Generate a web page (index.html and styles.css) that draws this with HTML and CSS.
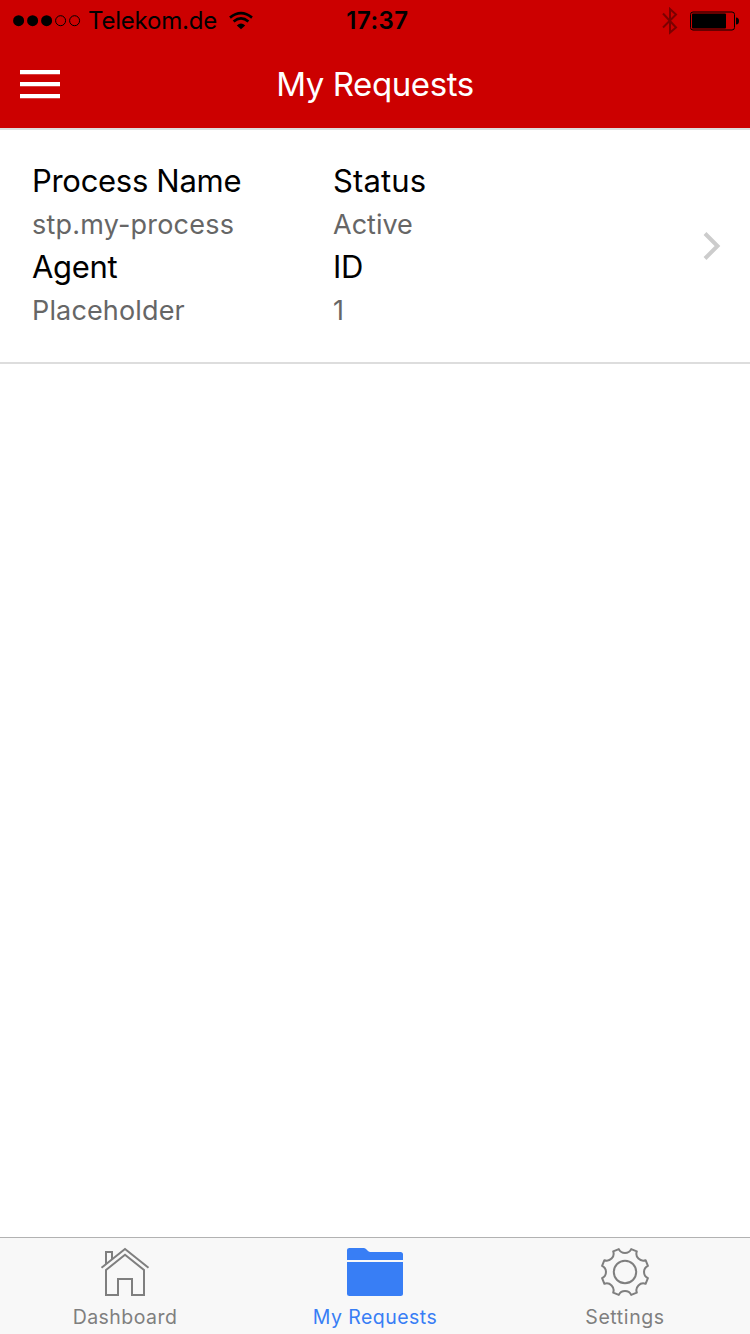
FILE: index.html
```html
<!DOCTYPE html>
<html lang="en">
<head>
<meta charset="utf-8">
<title>My Requests</title>
<link rel="stylesheet" href="styles.css">
</head>
<body>
<div class="app">
  <header class="header">
    <div class="status-bar">
      <div class="carrier">
        <svg class="signal" width="68" height="12" viewBox="0 0 68 12">
          <circle cx="5.6" cy="5.7" r="5.5"/><circle cx="19.6" cy="5.7" r="5.5"/><circle cx="33.6" cy="5.7" r="5.5"/>
          <g fill="none" stroke="#000"><circle cx="47.6" cy="5.7" r="5"/><circle cx="61.6" cy="5.7" r="5"/></g>
        </svg>
        <span class="carrier-name">Telekom.de</span>
        <svg class="wifi" width="26" height="20" viewBox="0 0 26 20">
          <g fill="none" stroke="#000" stroke-width="2.7">
            <path d="M2 6.6 Q13 -2.2 24 6.6"/>
            <path d="M5.6 10.5 Q13 4.4 20.4 10.5"/>
          </g>
          <path d="M8.8 14.4 Q13 10.8 17.2 14.4 L13 18.2Z"/>
        </svg>
      </div>
      <time class="clock">17:37</time>
      <div class="indicators">
        <svg width="16" height="28" viewBox="0 0 16 28"><path d="M1 6.5 L14 20.5 L8 25.5 V2 L14 7.5 L1 20.5" fill="none" stroke="#7b0000" stroke-width="2"/></svg>
        <svg width="50" height="20" viewBox="0 0 50 20">
          <rect x="1.5" y="1" width="44" height="18" rx="2.5" fill="none" stroke="#000" stroke-width="1"/>
          <rect x="3" y="2.5" width="34" height="15" rx="1"/>
          <path d="M47 6.5 Q50 6.5 50 10 Q50 13.5 47 13.5Z"/>
        </svg>
      </div>
    </div>
    <div class="nav-bar">
      <button class="menu" aria-label="Menu">
        <svg width="40" height="30" viewBox="0 0 40 30" fill="#fff"><path d="M0 1.1H40V5.2H0ZM0 13.1H40V17.2H0ZM0 25.1H40V29.2H0Z"/></svg>
      </button>
      <h1 class="title">My Requests</h1>
    </div>
  </header>
  <main class="content">
    <article class="request">
      <dl class="fields">
        <div class="col">
          <dt>Process Name</dt><dd class="process-value">stp.my-process</dd>
          <dt>Agent</dt><dd class="agent-value">Placeholder</dd>
        </div>
        <div class="col">
          <dt class="status-label">Status</dt><dd>Active</dd>
          <dt>ID</dt><dd>1</dd>
        </div>
      </dl>
      <svg class="chevron" width="20" height="32" viewBox="0 0 20 32"><path d="M3 3.5 L15.5 16 L3 28.5" fill="none" stroke="#ccc" stroke-width="4"/></svg>
    </article>
  </main>
  <nav class="tabs">
    <a class="tab">
      <svg width="60" height="52" viewBox="0 0 60 52" fill="none" stroke="#7f7f7f" stroke-width="2">
        <path d="M6.5 21.7 L30 3 L53.5 21.7 M11 18 V6 H17 V13"/>
        <path d="M11 24 L30 8.8 L49 24 V49 H37 V33 H23 V49 H11Z"/>
      </svg>
      <span class="label-dash">Dashboard</span>
    </a>
    <a class="tab active">
      <svg width="60" height="52" viewBox="0 0 60 52" fill="#387ef5">
        <path d="M2 14 V4 Q2 2 4.5 2 H18.5 Q20 2 21 3 L23 5 Q24 6 25.5 6 H55.5 Q58 6 58 8.5 V14Z"/>
        <path d="M2 16 H58 V47.5 Q58 50 55.5 50 H4.5 Q2 50 2 47.5Z"/>
      </svg>
      <span class="label-req">My Requests</span>
    </a>
    <a class="tab">
      <svg width="60" height="52" viewBox="-30 -26 60 52" fill="none" stroke="#7f7f7f" stroke-width="2" stroke-linejoin="round">
        <circle r="11.2"/>
        <path d="M-6.2 -22.9 A6.9 6.9 0 0 0 6.2 -22.9 L11.8 -20.6 A6.9 6.9 0 0 0 20.6 -11.8 L22.9 -6.2 A6.9 6.9 0 0 0 22.9 6.2 L20.6 11.8 A6.9 6.9 0 0 0 11.8 20.6 L6.2 22.9 A6.9 6.9 0 0 0 -6.2 22.9 L-11.8 20.6 A6.9 6.9 0 0 0 -20.6 11.8 L-22.9 6.2 A6.9 6.9 0 0 0 -22.9 -6.2 L-20.6 -11.8 A6.9 6.9 0 0 0 -11.8 -20.6Z"/>
      </svg>
      <span>Settings</span>
    </a>
  </nav>
</div>
</body>
</html>
```
FILE: styles.css
```css
* { box-sizing: border-box; }
body { margin: 0; font-family: Inter, "Liberation Sans", sans-serif; color: #000; }
svg { display: block; flex: none; }
.app { width: 750px; height: 1334px; display: flex; flex-direction: column; background: #fff; }
.header { height: 130px; background: #c00; border-bottom: 2px solid #ddd; }
.status-bar { height: 40px; display: grid; grid-template-columns: 1fr auto 1fr; align-items: center; padding: 2px 11px 0 13px; }
.carrier { display: flex; align-items: center; height: 38px; }
.carrier-name { font-size: 24px; line-height: 36px; margin-left: 7px; width: 129px; letter-spacing: -.2px; white-space: nowrap; }
.wifi { margin-left: 11px; }
.clock { font-size: 24px; font-weight: 600; line-height: 36px; letter-spacing: .5px; padding-left: 3px; }
.indicators { display: flex; justify-content: flex-end; align-items: center; gap: 11px; }
.nav-bar { height: 88px; display: grid; grid-template-columns: 40px 1fr 40px; align-items: center; padding: 0 20px; }
.menu { width: 40px; padding: 0; border: 0; background: none; }
.title { margin: 0; text-align: center; color: #fff; font-size: 33px; font-weight: 400; line-height: 44px; letter-spacing: -.4px; }
.content { flex: 1; }
.request { height: 234px; border-bottom: 2px solid #ddd; display: flex; align-items: center; justify-content: space-between; padding: 0 28px 0 32px; }
.fields { margin: 0; display: grid; grid-template-columns: 301px 301px; }
.col { display: flex; flex-direction: column; }
.col dt { font-size: 31px; line-height: 41px; padding-bottom: 2px; white-space: nowrap; letter-spacing: -.3px; }
.col .status-label { letter-spacing: .15px; }
.col dd { margin: 0; font-size: 27px; line-height: 43px; color: #666; white-space: nowrap; }
.col .process-value { letter-spacing: .2px; }
.col .agent-value { letter-spacing: .15px; }
.tabs { height: 97px; background: #f8f8f8; border-top: 1px solid #b2b2b2; display: grid; grid-template-columns: repeat(3, 1fr); }
.tab { display: flex; flex-direction: column; align-items: center; padding-top: 8px; color: #7f7f7f; font-size: 19.5px; line-height: 28px; letter-spacing: .6px; }
.tab span { margin-top: 5px; white-space: nowrap; }
.tab .label-dash, .tab .label-req { letter-spacing: .45px; }
.tab.active { color: #387ef5; }
```
